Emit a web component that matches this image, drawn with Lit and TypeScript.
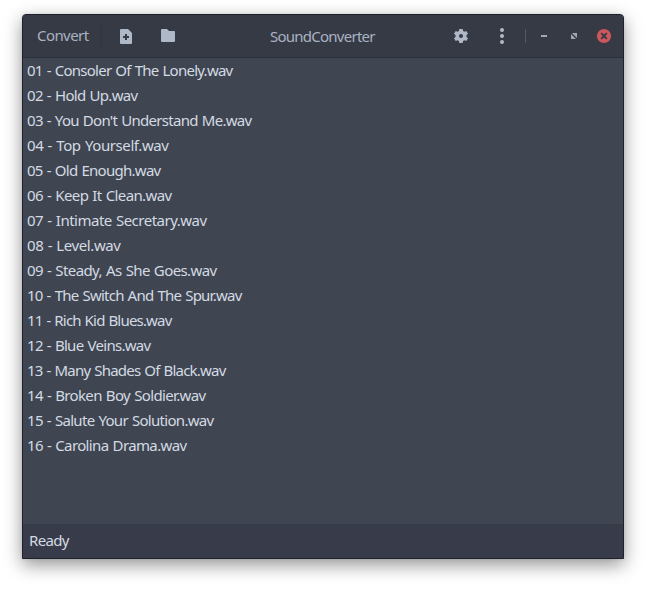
import { LitElement, html, css } from "lit";
import { customElement } from "lit/decorators.js";

interface Track {
  name: string;
  width: number;
}

const TRACKS: Track[] = [
  { name: "01 - Consoler Of The Lonely.wav", width: 205.5 },
  { name: "02 - Hold Up.wav", width: 110.5 },
  { name: "03 - You Don't Understand Me.wav", width: 224.5 },
  { name: "04 - Top Yourself.wav", width: 141.5 },
  { name: "05 - Old Enough.wav", width: 133.5 },
  { name: "06 - Keep It Clean.wav", width: 144.5 },
  { name: "07 - Intimate Secretary.wav", width: 179.5 },
  { name: "08 - Level.wav", width: 93.5 },
  { name: "09 - Steady, As She Goes.wav", width: 189.5 },
  { name: "10 - The Switch And The Spur.wav", width: 214.5 },
  { name: "11 - Rich Kid Blues.wav", width: 144.5 },
  { name: "12 - Blue Veins.wav", width: 123.5 },
  { name: "13 - Many Shades Of Black.wav", width: 198.5 },
  { name: "14 - Broken Boy Soldier.wav", width: 178.5 },
  { name: "15 - Salute Your Solution.wav", width: 186.5 },
  { name: "16 - Carolina Drama.wav", width: 159.5 },
];

/** A single-line label whose tracking is adjusted to fill a given width. */
@customElement("fitted-label")
class FittedLabel extends LitElement {
  static properties = { text: { type: String }, width: { type: Number } };
  declare text: string;
  declare width: number;

  static styles = css`
    :host { display: block; white-space: pre; }
    .label { display: inline-block; word-spacing: 0.8px; }
  `;

  firstUpdated() {
    const label = this.renderRoot.querySelector(".label") as HTMLElement;
    const natural = label.getBoundingClientRect().width;
    label.style.letterSpacing = `${(this.width - natural) / this.text.length}px`;
  }

  render() {
    return html`<span class="label">${this.text}</span>`;
  }
}

@customElement("app-root")
class AppRoot extends LitElement {
  static styles = css`
    :host {
      display: block;
      box-sizing: border-box;
      width: 646px;
      height: 589px;
      padding: 14px 22px 30px;
      overflow: hidden;
      background: #fff;
      font: 15px/25px "Noto Sans", "Open Sans", sans-serif;
    }
    .window {
      box-sizing: border-box;
      height: 545px;
      display: flex;
      flex-direction: column;
      border: 1px solid #1f222b;
      border-radius: 4px 4px 0 0;
      background: #404552;
      box-shadow: 0 6px 18px rgba(0, 0, 0, 0.42), 0 0 3px rgba(0, 0, 0, 0.1);
    }
    .header {
      box-sizing: border-box;
      height: 43px;
      display: grid;
      grid-template-columns: 79px 48px 36px 1fr 36px 46px 1px 36px 24px 36px;
      padding-right: 1px;
      align-items: center;
      border-bottom: 1px solid #2c303b;
      border-radius: 3px 3px 0 0;
      background: #363a45;
      color: #a9b2c2;
      flex: none;
    }
    .convert {
      box-sizing: border-box;
      height: 30px;
      padding: 2px 0 0 14px;
      border-right: 1px solid #313540;
    }
    .title { padding: 1px 0 0 84px; }
    svg { display: block; justify-self: center; fill: #afb8c6; }
    .divider { height: 14px; background: #535966; }
    .control { fill: #a0a7b2; }
    .list {
      flex: 1;
      padding-left: 4px;
      color: #d3dae3;
      background: #404651;
    }
    .status {
      height: 34px;
      box-sizing: border-box;
      padding: 4px 0 0 6px;
      background: #383c4a;
      color: #d3dae3;
      flex: none;
    }
  `;

  render() {
    return html`
      <div class="window">
        <div class="header">
          <div class="convert"><fitted-label .text=${"Convert"} .width=${51.5}></fitted-label></div>
          <svg width="16" height="16" viewBox="0 0 16 16">
            <path fill-rule="evenodd" d="M3 1h7l4 4v10a1 1 0 0 1-1 1H3a1 1 0 0 1-1-1V2a1 1 0 0 1 1-1zM7 6v2H5v2h2v2h2v-2h2V8H9V6z" />
          </svg>
          <svg width="16" height="16" viewBox="0 0 16 16">
            <path d="M2 1h5l2 2h5a1 1 0 0 1 1 1v9a1 1 0 0 1-1 1H2a1 1 0 0 1-1-1V2a1 1 0 0 1 1-1z" />
          </svg>
          <div class="title"><fitted-label .text=${"SoundConverter"} .width=${104.7}></fitted-label></div>
          <svg width="16" height="16" viewBox="0 0 16 16">
            <path fill-rule="evenodd" d="M6.300 1h3.400l.4 2 1.300.7 1.900-.8 1.700 2.900-1.500 1.300v1.800l1.500 1.300-1.700 2.900-1.900-.8-1.300.7-.4 2H6.300l-.4-2-1.300-.7-1.900.8L1 10.200l1.500-1.300V7.100L1 5.800l1.700-2.900 1.900.8L5.900 3zM8 6a2 2 0 1 0 0 4a2 2 0 1 0 0-4z" />
          </svg>
          <svg width="16" height="16" viewBox="0 0 16 16">
            <circle cx="8" cy="2" r="2" /><circle cx="8" cy="8" r="2" /><circle cx="8" cy="14" r="2" />
          </svg>
          <div class="divider"></div>
          <svg class="control" width="16" height="16" viewBox="0 0 16 16">
            <rect x="5" y="7" width="6" height="2" />
          </svg>
          <svg class="control" width="16" height="16" viewBox="0 0 16 16">
            <path d="M6 5h5v5zM5 6l5 5H5z" />
          </svg>
          <svg width="16" height="16" viewBox="0 0 16 16">
            <circle cx="8" cy="8" r="7.100" fill="#cc575d" />
            <path d="M5.200 5.200l5.600 5.600M10.800 5.200l-5.600 5.600" stroke="#363a45" stroke-width="1.900" />
          </svg>
        </div>
        <div class="list">
          ${TRACKS.map((t) => html`<fitted-label .text=${t.name} .width=${t.width}></fitted-label>`)}
        </div>
        <div class="status"><fitted-label .text=${"Ready"} .width=${39.7}></fitted-label></div>
      </div>
    `;
  }
}
